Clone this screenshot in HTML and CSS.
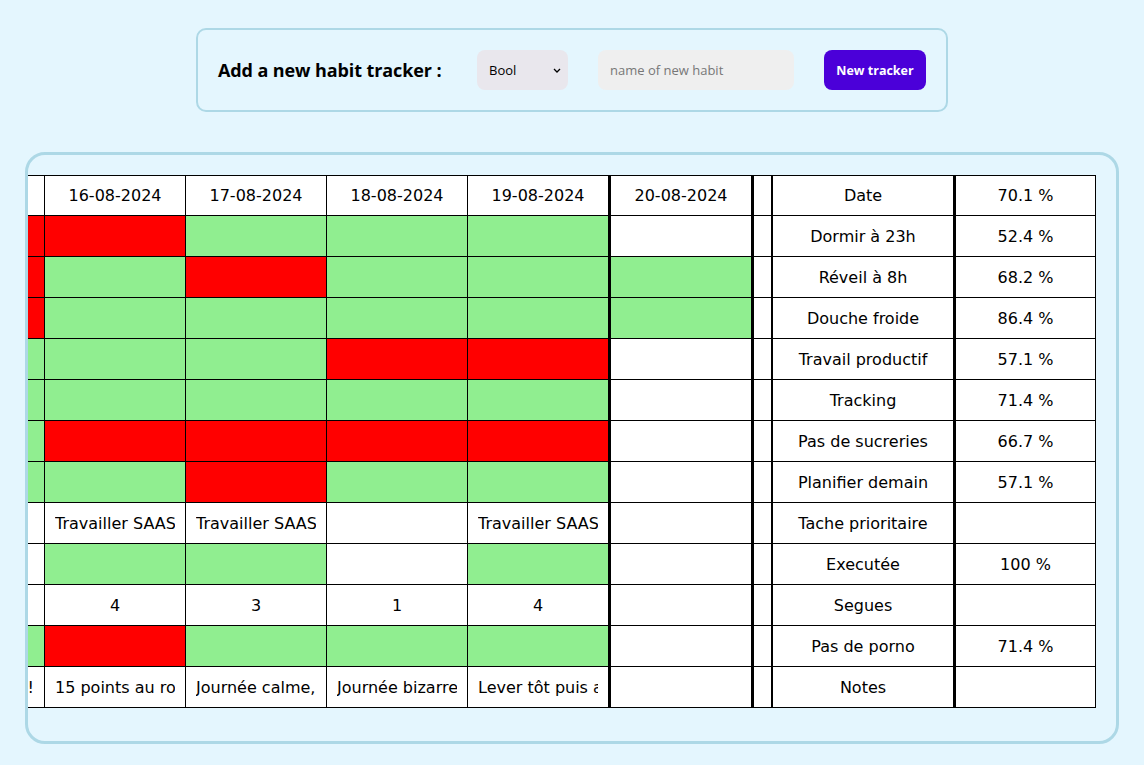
FILE: index.html
```html
<!DOCTYPE html>
<html lang="fr">
<head>
<meta charset="utf-8">
<title>Habit tracker</title>
<link rel="stylesheet" href="styles.css">
</head>
<body>
  <div class="top">
    <form class="add-form">
      <span class="add-label">Add a new habit tracker :</span>
      <div class="select-wrap">
        <select class="type-select">
          <option>Bool</option>
          <option>Text</option>
          <option>Number</option>
        </select>
        <svg class="chev" width="8" height="5" viewBox="0 0 8 5" aria-hidden="true"><path d="M1 1 L4 4 L7 1" fill="none" stroke="#000" stroke-width="1.3"/></svg>
      </div>
      <input class="name-input" type="text" placeholder="name of new habit">
      <button class="add-btn" type="button">New tracker</button>
    </form>
  </div>

  <div class="board">
    <table class="grid">
      <thead>
        <tr>
          <th class="c-day"><div class="cell hdr">15-08-2024</div></th>
          <th class="c-day"><div class="cell hdr">16-08-2024</div></th>
          <th class="c-day"><div class="cell hdr">17-08-2024</div></th>
          <th class="c-day"><div class="cell hdr">18-08-2024</div></th>
          <th class="c-day sep"><div class="cell hdr">19-08-2024</div></th>
          <th class="c-day sep"><div class="cell hdr">20-08-2024</div></th>
          <th class="c-gap"><div class="cell hdr"></div></th>
          <th class="c-name sep"><div class="cell hdr">Date</div></th>
          <th class="c-pct"><div class="cell hdr">70.1 %</div></th>
        </tr>
      </thead>
      <tbody>
        <tr>
          <td class="no"><div class="cell"></div></td>
          <td class="no"><div class="cell"></div></td>
          <td class="yes"><div class="cell"></div></td>
          <td class="yes"><div class="cell"></div></td>
          <td class="yes sep"><div class="cell"></div></td>
          <td class="sep"><div class="cell"></div></td>
          <td class="gap"><div class="cell"></div></td>
          <td class="sep"><div class="cell">Dormir à 23h</div></td>
          <td><div class="cell">52.4 %</div></td>
        </tr>
        <tr>
          <td class="no"><div class="cell"></div></td>
          <td class="yes"><div class="cell"></div></td>
          <td class="no"><div class="cell"></div></td>
          <td class="yes"><div class="cell"></div></td>
          <td class="yes sep"><div class="cell"></div></td>
          <td class="yes sep"><div class="cell"></div></td>
          <td class="gap"><div class="cell"></div></td>
          <td class="sep"><div class="cell">Réveil à 8h</div></td>
          <td><div class="cell">68.2 %</div></td>
        </tr>
        <tr>
          <td class="no"><div class="cell"></div></td>
          <td class="yes"><div class="cell"></div></td>
          <td class="yes"><div class="cell"></div></td>
          <td class="yes"><div class="cell"></div></td>
          <td class="yes sep"><div class="cell"></div></td>
          <td class="yes sep"><div class="cell"></div></td>
          <td class="gap"><div class="cell"></div></td>
          <td class="sep"><div class="cell">Douche froide</div></td>
          <td><div class="cell">86.4 %</div></td>
        </tr>
        <tr>
          <td class="yes"><div class="cell"></div></td>
          <td class="yes"><div class="cell"></div></td>
          <td class="yes"><div class="cell"></div></td>
          <td class="no"><div class="cell"></div></td>
          <td class="no sep"><div class="cell"></div></td>
          <td class="sep"><div class="cell"></div></td>
          <td class="gap"><div class="cell"></div></td>
          <td class="sep"><div class="cell">Travail productif</div></td>
          <td><div class="cell">57.1 %</div></td>
        </tr>
        <tr>
          <td class="yes"><div class="cell"></div></td>
          <td class="yes"><div class="cell"></div></td>
          <td class="yes"><div class="cell"></div></td>
          <td class="yes"><div class="cell"></div></td>
          <td class="yes sep"><div class="cell"></div></td>
          <td class="sep"><div class="cell"></div></td>
          <td class="gap"><div class="cell"></div></td>
          <td class="sep"><div class="cell">Tracking</div></td>
          <td><div class="cell">71.4 %</div></td>
        </tr>
        <tr>
          <td class="yes"><div class="cell"></div></td>
          <td class="no"><div class="cell"></div></td>
          <td class="no"><div class="cell"></div></td>
          <td class="no"><div class="cell"></div></td>
          <td class="no sep"><div class="cell"></div></td>
          <td class="sep"><div class="cell"></div></td>
          <td class="gap"><div class="cell"></div></td>
          <td class="sep"><div class="cell">Pas de sucreries</div></td>
          <td><div class="cell">66.7 %</div></td>
        </tr>
        <tr>
          <td class="yes"><div class="cell"></div></td>
          <td class="yes"><div class="cell"></div></td>
          <td class="no"><div class="cell"></div></td>
          <td class="yes"><div class="cell"></div></td>
          <td class="yes sep"><div class="cell"></div></td>
          <td class="sep"><div class="cell"></div></td>
          <td class="gap"><div class="cell"></div></td>
          <td class="sep"><div class="cell">Planifier demain</div></td>
          <td><div class="cell">57.1 %</div></td>
        </tr>
        <tr>
          <td><div class="cell"></div></td>
          <td><div class="cell">Travailler SAAS</div></td>
          <td><div class="cell">Travailler SAAS</div></td>
          <td><div class="cell"></div></td>
          <td class="sep"><div class="cell">Travailler SAAS</div></td>
          <td class="sep"><div class="cell"></div></td>
          <td class="gap"><div class="cell"></div></td>
          <td class="sep"><div class="cell">Tache prioritaire</div></td>
          <td><div class="cell"></div></td>
        </tr>
        <tr>
          <td><div class="cell"></div></td>
          <td class="yes"><div class="cell"></div></td>
          <td class="yes"><div class="cell"></div></td>
          <td><div class="cell"></div></td>
          <td class="yes sep"><div class="cell"></div></td>
          <td class="sep"><div class="cell"></div></td>
          <td class="gap"><div class="cell"></div></td>
          <td class="sep"><div class="cell">Executée</div></td>
          <td><div class="cell">100 %</div></td>
        </tr>
        <tr>
          <td><div class="cell"></div></td>
          <td><div class="cell">4</div></td>
          <td><div class="cell">3</div></td>
          <td><div class="cell">1</div></td>
          <td class="sep"><div class="cell">4</div></td>
          <td class="sep"><div class="cell"></div></td>
          <td class="gap"><div class="cell"></div></td>
          <td class="sep"><div class="cell">Segues</div></td>
          <td><div class="cell"></div></td>
        </tr>
        <tr>
          <td class="yes"><div class="cell"></div></td>
          <td class="no"><div class="cell"></div></td>
          <td class="yes"><div class="cell"></div></td>
          <td class="yes"><div class="cell"></div></td>
          <td class="yes sep"><div class="cell"></div></td>
          <td class="sep"><div class="cell"></div></td>
          <td class="gap"><div class="cell"></div></td>
          <td class="sep"><div class="cell">Pas de porno</div></td>
          <td><div class="cell">71.4 %</div></td>
        </tr>
        <tr>
          <td><div class="cell cell-end">Top !</div></td>
          <td><div class="cell">15 points au rowing aujourd'hui</div></td>
          <td><div class="cell">Journée calme, pas grand chose</div></td>
          <td><div class="cell">Journée bizarre, fatigué</div></td>
          <td class="sep"><div class="cell">Lever tôt puis a fond sur le SAAS</div></td>
          <td class="sep"><div class="cell"></div></td>
          <td class="gap"><div class="cell"></div></td>
          <td class="sep"><div class="cell">Notes</div></td>
          <td><div class="cell"></div></td>
        </tr>
      </tbody>
    </table>
  </div>
</body>
</html>
```

FILE: styles.css
```css
html, body {
  margin: 0;
  padding: 0;
}

body {
  background: #e4f6fe;
  font-family: "DejaVu Sans", sans-serif;
  color: #000;
  padding: 28px 25px 0;
}

.top {
  display: flex;
  justify-content: center;
}

.add-form {
  display: flex;
  align-items: center;
  gap: 30px;
  padding: 20px;
  border: 2px solid #add8e6;
  border-radius: 10px;
}

.add-label {
  font-family: "Open Sans", sans-serif;
  font-weight: 700;
  font-size: 18px;
  letter-spacing: -0.1px;
  width: 229px;
  white-space: nowrap;
}

.select-wrap {
  position: relative;
  width: 91px;
  height: 40px;
}

.type-select {
  -webkit-appearance: none;
  appearance: none;
  width: 91px;
  height: 40px;
  border: none;
  border-radius: 8px;
  background: #e9e7ed;
  padding: 0 20px 0 12px;
  font-family: "Open Sans", sans-serif;
  font-size: 13px;
  color: #000;
}

.chev {
  position: absolute;
  right: 7px;
  top: 18px;
  pointer-events: none;
}

.name-input {
  box-sizing: border-box;
  width: 196px;
  height: 40px;
  border: none;
  border-radius: 8px;
  background: #efefef;
  padding: 0 12px;
  font-family: "Open Sans", sans-serif;
  font-size: 13px;
}

.name-input::placeholder {
  color: #777;
}

.add-btn {
  width: 102px;
  height: 40px;
  border: none;
  border-radius: 8px;
  background: #4b00d9;
  color: #fff;
  font-family: "Open Sans", sans-serif;
  font-weight: 700;
  font-size: 12.5px;
  padding: 0;
}

.board {
  margin-top: 40px;
  border: 3px solid #add8e6;
  border-radius: 20px;
  padding: 20px 20px 33px;
  overflow: hidden;
  display: flex;
  justify-content: flex-end;
}

.grid {
  flex: none;
  width: 1192px;
  table-layout: fixed;
  border-collapse: separate;
  border-spacing: 0;
  background: #fff;
  font-size: 16px;
}

.grid th,
.grid td {
  box-sizing: border-box;
  padding: 0 10px;
  border-right: 1px solid #000;
  border-bottom: 1px solid #000;
  font-weight: 400;
  text-align: center;
  vertical-align: middle;
}

.grid th {
  border-top: 1px solid #000;
}

.grid .c-day { width: 141px; }
.grid .c-day.sep { width: 143px; }
.grid .c-gap { width: 19px; }
.grid .c-name { width: 183px; }
.grid .c-pct { width: 140px; }

.grid .sep {
  border-right-width: 3px;
}

.grid .c-gap,
.grid .gap {
  border-right-width: 2px;
  padding: 0;
}

.cell {
  box-sizing: border-box;
  height: 40px;
  padding-top: 1px;
  line-height: 40px;
  overflow: hidden;
  white-space: nowrap;
}

.cell.hdr {
  height: 39px;
  padding-top: 0;
  line-height: 39px;
}

.cell-end {
  text-align: right;
}

.yes { background: #90ee90; }
.no { background: #ff0000; }
```
